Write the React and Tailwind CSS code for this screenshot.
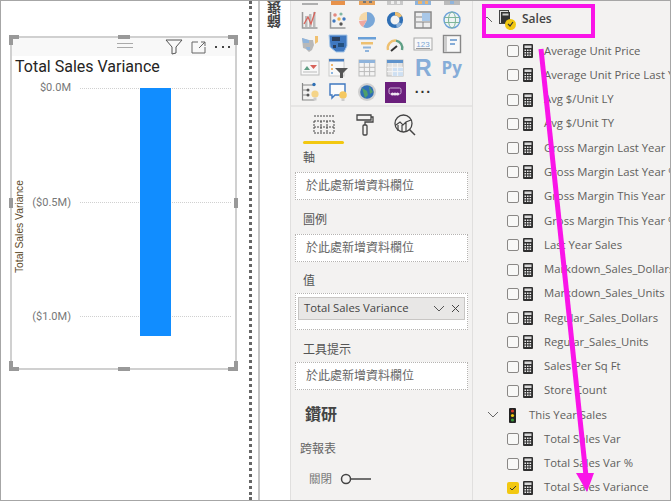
const cjk = '"Open Sans", "Noto Sans CJK TC", sans-serif';

const Calc = () => (
  <svg width="10" height="14" viewBox="0 0 10 14" className="shrink-0">
    <rect x="0" y="0" width="10" height="14" rx="1" fill="#2f2f2f" />
    <rect x="1.5" y="1.5" width="7" height="2.5" fill="#d8d8d8" />
    {[5.5, 8, 10.5].map((y) =>
      [1.5, 4, 6.5].map((x) => <rect key={`${x}-${y}`} x={x} y={y} width="1.6" height="1.5" fill="#e8e8e8" />)
    )}
  </svg>
);

const Check = ({ checked }) =>
  checked ? (
    <div className="w-[12px] h-[12px] rounded-[2px] bg-[#f2c811] flex items-center justify-center shrink-0">
      <svg width="8" height="8" viewBox="0 0 8 8">
        <path d="M1 4l2 2 4-4" fill="none" stroke="#333" strokeWidth="1" />
      </svg>
    </div>
  ) : (
    <div className="w-[12px] h-[12px] rounded-[2px] border-[1.5px] border-[#8a8886] bg-[#f8f8f7] shrink-0" />
  );

const FieldRow = ({ name, checked }) => (
  <div className="h-[24.28px] flex items-center pl-[34px] whitespace-nowrap">
    <Check checked={checked} />
    <div className="ml-[4px] mr-[11px] flex"><Calc /></div>
    <span>{name}</span>
  </div>
);

const DropBox = ({ children }) => (
  <div className="mx-[4px] h-[28px] border border-dotted border-[#b5b3b1] bg-white flex items-center pl-[10px] text-[12px] text-[#666]">
    {children || '於此處新增資料欄位'}
  </div>
);

const Label = ({ children, className }) => (
  <div className={`pl-[12px] text-[12px] leading-[16px] text-[#555] ${className}`}>{children}</div>
);

const ic = { width: 20, height: 20, viewBox: '0 0 20 20' };

const icons = [
  // cut off row
  <svg {...ic}><path d="M2 18h16" stroke="#999" strokeWidth="1.5" /></svg>,
  <svg {...ic}><rect x="3" y="15" width="14" height="4" fill="#e8924a" /></svg>,
  <svg {...ic}><rect x="2" y="14" width="16" height="5" fill="#e8a25a" /><rect x="6" y="15" width="3" height="2" fill="#777" /><rect x="12" y="15" width="3" height="2" fill="#777" /></svg>,
  <svg {...ic}><rect x="2" y="15" width="16" height="4" fill="#c8c8c8" /><rect x="6" y="15" width="3" height="3" fill="#eee" /><rect x="12" y="15" width="3" height="3" fill="#eee" /></svg>,
  <svg {...ic}><rect x="2" y="15" width="16" height="4" fill="#8fb4dc" /><rect x="5" y="15" width="4" height="3" fill="#eeb56a" /><rect x="12" y="15" width="3" height="3" fill="#eeb56a" /></svg>,
  <svg {...ic}><rect x="2" y="15" width="16" height="4" fill="#bbb" /><rect x="8" y="15" width="4" height="3" fill="#8fb4dc" /></svg>,
  // line + column
  <svg {...ic}>
    <path d="M2.5 2v16h15" fill="none" stroke="#999" strokeWidth="1.5" />
    <rect x="5" y="6" width="2.5" height="11" fill="#bbb" />
    <rect x="9" y="4" width="2.5" height="13" fill="#bbb" />
    <rect x="13" y="2" width="2.5" height="15" fill="#bbb" />
    <path d="M4 14l4-7 3 7 4-12" fill="none" stroke="#d8635a" strokeWidth="1.3" />
  </svg>,
  // scatter
  <svg {...ic}>
    <path d="M2.5 2v16h15" fill="none" stroke="#999" strokeWidth="1.5" />
    <circle cx="7" cy="5" r="1.8" fill="#e4897f" />
    <circle cx="13" cy="4" r="1.6" fill="#7fb6a4" />
    <circle cx="6" cy="11" r="1.7" fill="#3f78c0" />
    <circle cx="11" cy="9" r="1.7" fill="#eeb04a" />
    <circle cx="16" cy="9" r="1.7" fill="#3f78c0" />
    <circle cx="13" cy="14" r="1.7" fill="#555" />
  </svg>,
  // pie
  <svg {...ic}>
    <path d="M10 2a8 8 0 1 1-4 15l4-7z" fill="#79a7d8" />
    <path d="M10 10L6 17a8 8 0 0 1-4-6z" fill="#f0a8a0" />
    <path d="M10 10H2a8 8 0 0 1 8-8z" fill="#f5d9a8" />
  </svg>,
  // donut
  <svg {...ic}>
    <circle cx="10" cy="10" r="6.3" fill="none" stroke="#2f6fb5" strokeWidth="3.6" />
    <path d="M10 3.7a6.3 6.3 0 0 1 5.5 3.2" fill="none" stroke="#f0c070" strokeWidth="3.6" />
    <path d="M15.5 13a6.3 6.3 0 0 1-4 3.2" fill="none" stroke="#8fb4dc" strokeWidth="3.6" />
  </svg>,
  // treemap
  <svg {...ic}>
    <rect x="2" y="2" width="16" height="16" fill="#eee" stroke="#888" strokeWidth="1.5" />
    <rect x="9" y="3" width="8" height="8" fill="#a9c8e8" />
    <path d="M3 7h6M3 12h14M10 12v6" stroke="#888" strokeWidth="1" />
  </svg>,
  // globe
  <svg {...ic}>
    <circle cx="10" cy="10" r="8" fill="#eef4f4" stroke="#6aa0d8" strokeWidth="1.4" />
    <ellipse cx="10" cy="10" rx="3.5" ry="8" fill="none" stroke="#7fb69a" />
    <path d="M2.5 7.5h15M2.5 12.5h15" stroke="#7fb69a" />
  </svg>,
  // filled map light
  <svg {...ic}>
    <path d="M2 4l6 2h5l1 5-2 5-3 2-3-3-3-1z" fill="#b8b8b8" />
    <path d="M2 4l7 2v3H3z" fill="#8fb4dc" />
    <path d="M6 13h4v3H7z" fill="#8fb4dc" />
    <path d="M15 2h3v6l-3 2z" fill="#f0c070" />
  </svg>,
  // filled map dark
  <svg {...ic} viewBox="0 0 20 20">
    <path d="M1 1h18v11l-3 6H8l-6-5z" fill="#3f78c0" stroke="#a9c8e8" />
    <rect x="4" y="3" width="8" height="4" fill="#2b3f5c" />
    <rect x="10" y="9" width="6" height="4" fill="#23507f" />
    <rect x="5" y="11" width="3" height="3" fill="#2b3f5c" />
  </svg>,
  // funnel
  <svg {...ic}>
    <rect x="1" y="3" width="18" height="2.5" fill="#6aa0d8" />
    <rect x="4" y="8" width="12" height="2.5" fill="#eec070" />
    <rect x="6" y="12.5" width="8" height="2" fill="#8fb4dc" />
    <rect x="8" y="16" width="4" height="2" fill="#8fb4dc" />
  </svg>,
  // gauge
  <svg {...ic}>
    <path d="M3 16a7.5 7.5 0 0 1 8-9.4" fill="none" stroke="#eec070" strokeWidth="2.4" />
    <path d="M11 6.6a7.5 7.5 0 0 1 6 9.4" fill="none" stroke="#5f9f85" strokeWidth="2.4" />
    <path d="M6 17l6-5" stroke="#333" strokeWidth="2" />
  </svg>,
  // card
  <svg {...ic}>
    <rect x="1" y="4" width="18" height="12" fill="#f8f8f8" stroke="#aaa" />
    <text x="10" y="12.5" textAnchor="middle" fontSize="8" fill="#7aa5d5" fontFamily="Liberation Sans">123</text>
    <path d="M3 14.5h14" stroke="#999" />
  </svg>,
  // multi row card
  <svg {...ic}>
    <rect x="1.5" y="1.5" width="17" height="17" fill="#f8f8f8" stroke="#888" strokeWidth="1.4" />
    <rect x="2" y="2" width="3" height="16" fill="#ccc" />
    <path d="M8 6h7M8 10h5" stroke="#5f93cc" strokeWidth="1.6" />
  </svg>,
  // kpi
  <svg {...ic}>
    <rect x="1" y="3" width="18" height="14" fill="#f8f8f8" stroke="#bbb" />
    <path d="M4 12l3-4 3 4z" fill="#5f9f85" />
    <path d="M10 7h7l-3.5 4z" fill="#d8635a" />
    <path d="M3 14h14" stroke="#bbb" />
  </svg>,
  // slicer
  <svg {...ic}>
    <rect x="1" y="1" width="15" height="17" fill="#f8f8f8" stroke="#ccc" />
    <rect x="1" y="1" width="15" height="2.5" fill="#4a7fc0" />
    <circle cx="4" cy="7" r="1" fill="#eea040" />
    <circle cx="4" cy="11" r="1" fill="#eea040" />
    <circle cx="4" cy="15" r="1" fill="#6aa0d8" />
    <path d="M7 10h13l-5 5v5h-3v-5z" fill="#555" />
  </svg>,
  // table
  <svg {...ic}>
    <rect x="2" y="2" width="16" height="16" fill="#f4f4f4" stroke="#bbb" />
    <rect x="2" y="2" width="16" height="3" fill="#8fb4dc" />
    <path d="M7.3 5v13M12.6 5v13M2 9.3h16M2 13.6h16" stroke="#bbb" />
  </svg>,
  // matrix
  <svg {...ic}>
    <rect x="2" y="2" width="16" height="16" fill="#e2e2e2" stroke="#bbb" />
    <rect x="2" y="2" width="16" height="3" fill="#5f93cc" />
    <rect x="7" y="9" width="11" height="9" fill="#cfe0f2" />
    <path d="M7.3 5v13M12.6 5v13M2 9.3h16M2 13.6h16" stroke="#f4f4f4" />
  </svg>,
  <span className="text-[23px] font-bold leading-[20px] text-[#86add8]" style={{ fontFamily: 'Liberation Sans' }}>R</span>,
  <span className="text-[17px] font-bold leading-[20px] text-[#86add8]" style={{ fontFamily: 'Open Sans' }}>Py</span>,
  // decomposition tree
  <svg {...ic}>
    <path d="M2.5 1v17h12" fill="none" stroke="#888" strokeWidth="1.2" />
    <path d="M3 3h10M3 8h4M3 13h4" stroke="#888" />
    <circle cx="14" cy="2.5" r="1.7" fill="#2f6fb5" />
    <circle cx="8" cy="8" r="1.5" fill="#555" />
    <circle cx="8" cy="13" r="1.5" fill="#555" />
    <circle cx="15" cy="12" r="3.6" fill="#f5d488" />
    <rect x="13.5" y="15.5" width="3" height="3" fill="#ccc" />
  </svg>,
  // Q&A
  <svg {...ic}>
    <path d="M2 2h15v11H7l-3 3v-3H2z" fill="#fbfbfb" stroke="#3f78c0" strokeWidth="1.4" />
    <circle cx="15" cy="13" r="3.8" fill="#f5c860" />
    <rect x="13.5" y="16.5" width="3" height="2.5" fill="#ccc" />
  </svg>,
  // globe badge
  <svg {...ic}>
    <circle cx="10" cy="10" r="9" fill="#d0d0d0" />
    <circle cx="10" cy="10" r="6.8" fill="#2f6fb5" />
    <path d="M5 6l5 3 1 4-3 3zM12 4l4 6-3 2z" fill="#4f9f6a" />
  </svg>,
  // purple visual
  <div className="w-[21px] h-[21px] bg-[#6b1f7c] flex items-center justify-center">
    <svg width="14" height="10" viewBox="0 0 14 10">
      <rect x="1" y="1" width="12" height="6" rx="1.5" fill="none" stroke="#cdb4d6" />
      <circle cx="4.5" cy="7" r="1.6" fill="#f0e6f2" />
      <circle cx="7" cy="7" r="1.6" fill="#f0e6f2" />
      <circle cx="9.5" cy="7" r="1.6" fill="#f0e6f2" />
    </svg>
  </div>,
  <span className="text-[#333] text-[14px] leading-[14px] font-bold tracking-[1px]" style={{ fontFamily: 'Liberation Sans' }}>···</span>,
];

export default function App() {
  const fields1 = [
    'Average Unit Price', 'Average Unit Price Last Year', 'Avg $/Unit LY', 'Avg $/Unit TY',
    'Gross Margin Last Year', 'Gross Margin Last Year %', 'Gross Margin This Year', 'Gross Margin This Year %',
    'Last Year Sales', 'Markdown_Sales_Dollars', 'Markdown_Sales_Units', 'Regular_Sales_Dollars',
    'Regular_Sales_Units', 'Sales Per Sq Ft', 'Store Count',
  ];

  return (
    <div className="relative w-[671px] h-[501px] overflow-hidden flex bg-white border border-[#a6a6a6]" style={{ fontFamily: cjk }}>
      {/* report canvas */}
      <div className="w-[251px] h-full shrink-0 border-r-[3px] border-dotted border-[#666] pl-[9px] pt-[35px]">
        <div className="relative w-[227px] h-[334px] border-2 border-[#d0d0d0]">
          <div className="h-[18px] bg-[#f8f8f8] flex items-center justify-end relative">
            <div className="absolute left-[105px] top-[5px] w-[16px] h-[5px] border-y border-[#aaa]" />
            <svg width="18" height="16" viewBox="0 0 18 16" className="mr-[8px]">
              <path d="M1 1h16l-6 7v6l-4 1V8z" fill="none" stroke="#555" strokeWidth="1" />
            </svg>
            <svg width="15" height="13" viewBox="0 0 15 13" className="mr-[9px]">
              <path d="M7 1H1v11h13V6M8 7l6-6M10 1h4v4" fill="none" stroke="#666" strokeWidth="1" />
            </svg>
            <div className="flex gap-[4.5px] mr-[5px]">
              <div className="w-[2px] h-[2px] bg-[#444]" />
              <div className="w-[2px] h-[2px] bg-[#444]" />
              <div className="w-[2px] h-[2px] bg-[#444]" />
            </div>
          </div>
          <div className="pl-[3px] text-[16px] leading-[20px] mt-[1px] text-[#252423] whitespace-nowrap" style={{ fontFamily: 'Roboto, sans-serif' }}>
            Total Sales Variance
          </div>
          {/* chart */}
          <div className="flex mt-[11px] h-[229px]">
            <div className="w-[16px] flex items-center justify-center">
              <span className="[writing-mode:vertical-rl] rotate-180 mt-[48px] text-[10.3px] text-[#5c4a2a] whitespace-nowrap" style={{ fontFamily: 'Liberation Sans' }}>
                Total Sales Variance
              </span>
            </div>
            <div className="w-[43px] flex flex-col justify-between items-end -my-[8px] text-[11px] leading-[16px] text-[#777]" style={{ fontFamily: 'Roboto, sans-serif' }}>
              <span>$0.0M</span>
              <span>($0.5M)</span>
              <span>($1.0M)</span>
            </div>
            <div className="relative w-[151px] ml-[9px] flex flex-col justify-between">
              <div className="border-t border-dotted border-[#d0d0d0]" />
              <div className="border-t border-dotted border-[#d0d0d0]" />
              <div className="border-t border-dotted border-[#d0d0d0]" />
              <div className="absolute left-[60px] top-0 w-[31px] h-[248px] bg-[#118dff]" />
            </div>
          </div>
          {/* selection handles */}
          <div className="absolute -left-[3px] -top-[3px] w-[10px] h-[10px] border-l-4 border-t-4 border-[#999]" />
          <div className="absolute -right-[3px] -top-[3px] w-[10px] h-[10px] border-r-4 border-t-4 border-[#999]" />
          <div className="absolute -left-[3px] -bottom-[3px] w-[10px] h-[10px] border-l-4 border-b-4 border-[#999]" />
          <div className="absolute -right-[3px] -bottom-[3px] w-[10px] h-[10px] border-r-4 border-b-4 border-[#999]" />
          <div className="absolute left-[106px] -top-[3px] w-[12px] h-[4px] bg-[#999]" />
          <div className="absolute left-[106px] -bottom-[3px] w-[12px] h-[4px] bg-[#999]" />
          <div className="absolute -left-[3px] top-[160px] w-[4px] h-[10px] bg-[#999]" />
          <div className="absolute -right-[3px] top-[160px] w-[4px] h-[10px] bg-[#999]" />
        </div>
      </div>

      {/* collapsed filter strip */}
      <div className="w-[32px] h-full shrink-0 ml-[6px] border-l-2 border-[#c4c4c4] overflow-hidden flex justify-center">
        <span className="[writing-mode:vertical-rl] rotate-180 h-fit -mt-[1px] text-[14px] leading-[16px] text-[#444] font-bold">篩選</span>
      </div>

      {/* visualizations */}
      <div className="w-[183px] h-full shrink-0 bg-[#f3f2f1] border-x border-[#e0dfde] overflow-hidden">
        <div className="h-[106px] border-b-2 border-[#e6e5e4] pl-[5px] overflow-hidden">
          <div className="grid grid-cols-[repeat(6,28.3px)] auto-rows-[24px] -mt-[17px] justify-items-center items-center">
            {icons.map((icon, i) => (
              <div key={i} className="flex items-center justify-center">{icon}</div>
            ))}
          </div>
        </div>
        <div className="flex pl-[22px] pt-[8px] h-[34px]">
          <svg width="22" height="20" viewBox="0 0 22 20">
            <path d="M1 1h20M1 6h20M1 12h20M1 18h20" stroke="#444" strokeWidth="1" strokeDasharray="2 1" />
            <path d="M1 6v12M21 6v12M8 6v12M14 6v12" stroke="#444" strokeWidth="1" strokeDasharray="2 1" />
          </svg>
          <svg width="18" height="22" viewBox="0 0 18 22" className="ml-[21px] -mt-[1px]">
            <path d="M1 1h14v5H1zM15 3h2v5H9v3" fill="none" stroke="#444" strokeWidth="1.3" />
            <rect x="7" y="11" width="4" height="10" rx="1" fill="none" stroke="#444" strokeWidth="1.3" />
          </svg>
          <svg width="22" height="22" viewBox="0 0 22 22" className="ml-[20px] -mt-[1px]">
            <circle cx="9.5" cy="9.5" r="8.5" fill="none" stroke="#444" strokeWidth="1.3" />
            <path d="M15.5 15.5L21 21" stroke="#444" strokeWidth="1.5" />
            <path d="M2 11l4-3 3 3 3-3 5-2M4 17v-6M8 18v-7M12 17V8" fill="none" stroke="#444" strokeWidth="1.2" />
          </svg>
        </div>
        <div className="ml-[12px] w-[41px] h-[3px] rounded-full bg-[#f2c811]" />
        <Label className="mt-[6px]">軸</Label>
        <div className="mt-[6px]"><DropBox /></div>
        <Label className="mt-[12px]">圖例</Label>
        <div className="mt-[6px]"><DropBox /></div>
        <Label className="mt-[11px]">值</Label>
        <div className="mt-[4px] mx-[4px] h-[37px] border border-dotted border-[#b5b3b1] bg-white pt-[3px] px-[2px]">
          <div className="h-[23px] bg-[#e8e7e6] border border-[#c8c6c4] flex items-center pl-[5px] text-[11.3px] text-[#444]">
            <span className="flex-1">Total Sales Variance</span>
            <svg width="12" height="8" viewBox="0 0 12 8" className="mr-[6px]">
              <path d="M1 1l5 5 5-5" fill="none" stroke="#555" />
            </svg>
            <svg width="9" height="9" viewBox="0 0 9 9" className="mr-[4px]">
              <path d="M1 1l7 7M8 1l-7 7" stroke="#444" />
            </svg>
          </div>
        </div>
        <Label className="mt-[12px]">工具提示</Label>
        <div className="mt-[4px]"><DropBox /></div>
        <div className="pl-[14px] mt-[14px] text-[16px] leading-[20px] font-bold text-[#444]">鑽研</div>
        <div className="pl-[9px] mt-[17px] text-[12px] leading-[16px] text-[#666]">跨報表</div>
        <div className="pl-[18px] mt-[14px] flex items-center text-[11.5px] leading-[16px] text-[#777]">
          <span>關閉</span>
          <svg width="31" height="12" viewBox="0 0 31 12" className="ml-[8px]">
            <circle cx="6" cy="6" r="4.5" fill="none" stroke="#444" strokeWidth="1.5" />
            <path d="M11 6h20" stroke="#444" strokeWidth="1.5" />
          </svg>
        </div>
      </div>

      {/* fields */}
      <div className="flex-1 h-full bg-[#f3f2f1] overflow-hidden text-[11.3px] text-[#605e5c]">
        <div className="h-[36px] flex items-center pl-[8px]">
          <svg width="12" height="8" viewBox="0 0 12 8"><path d="M1 7l5-5 5 5" fill="none" stroke="#666" /></svg>
          <div className="relative ml-[6px] w-[14px] h-[16px] mt-[-3px]">
            <svg width="12" height="14" viewBox="0 0 12 14">
              <rect x="0.5" y="0.5" width="9" height="13" fill="#ddd" stroke="#444" />
              <rect x="2" y="2" width="9" height="11" fill="#333" />
              <rect x="3.5" y="3.5" width="6" height="2" fill="#ccc" />
            </svg>
            <div className="absolute left-[6px] top-[9px] w-[11px] h-[11px] rounded-full bg-[#f2c811] flex items-center justify-center">
              <svg width="7" height="6" viewBox="0 0 7 6"><path d="M1 3l2 2 3-4" fill="none" stroke="#333" strokeWidth="1.2" /></svg>
            </div>
          </div>
          <span className="ml-[9px] text-[12px] font-semibold text-[#444]">Sales</span>
        </div>
        <div className="h-[2px]" />
        {fields1.map((n) => <FieldRow key={n} name={n} />)}
        <div className="h-[24.28px] flex items-center pl-[14px] whitespace-nowrap">
          <svg width="12" height="8" viewBox="0 0 12 8"><path d="M1 1l5 5 5-5" fill="none" stroke="#666" /></svg>
          <svg width="7" height="15" viewBox="0 0 7 15" className="ml-[10px]">
            <rect width="7" height="15" rx="1" fill="#222" />
            <circle cx="3.5" cy="3" r="1.6" fill="#d83b2b" />
            <circle cx="3.5" cy="7.5" r="1.6" fill="#f2c811" />
            <circle cx="3.5" cy="12" r="1.6" fill="#3a9a3a" />
          </svg>
          <span className="ml-[13px]">This Year Sales</span>
        </div>
        <FieldRow name="Total Sales Var" />
        <FieldRow name="Total Sales Var %" />
        <FieldRow name="Total Sales Variance" checked />
      </div>

      {/* annotation overlay */}
      <div className="absolute left-[481px] top-[3px] w-[113px] h-[34px] border-4 border-[#fa14e8]" />
      <svg className="absolute left-0 top-0" width="671" height="501" viewBox="0 0 671 501">
        <path d="M540 48L585 475" stroke="#fa14e8" strokeWidth="5" fill="none" />
        <path d="M575 472h18l-7 19z" fill="#fa14e8" />
      </svg>
    </div>
  );
}
